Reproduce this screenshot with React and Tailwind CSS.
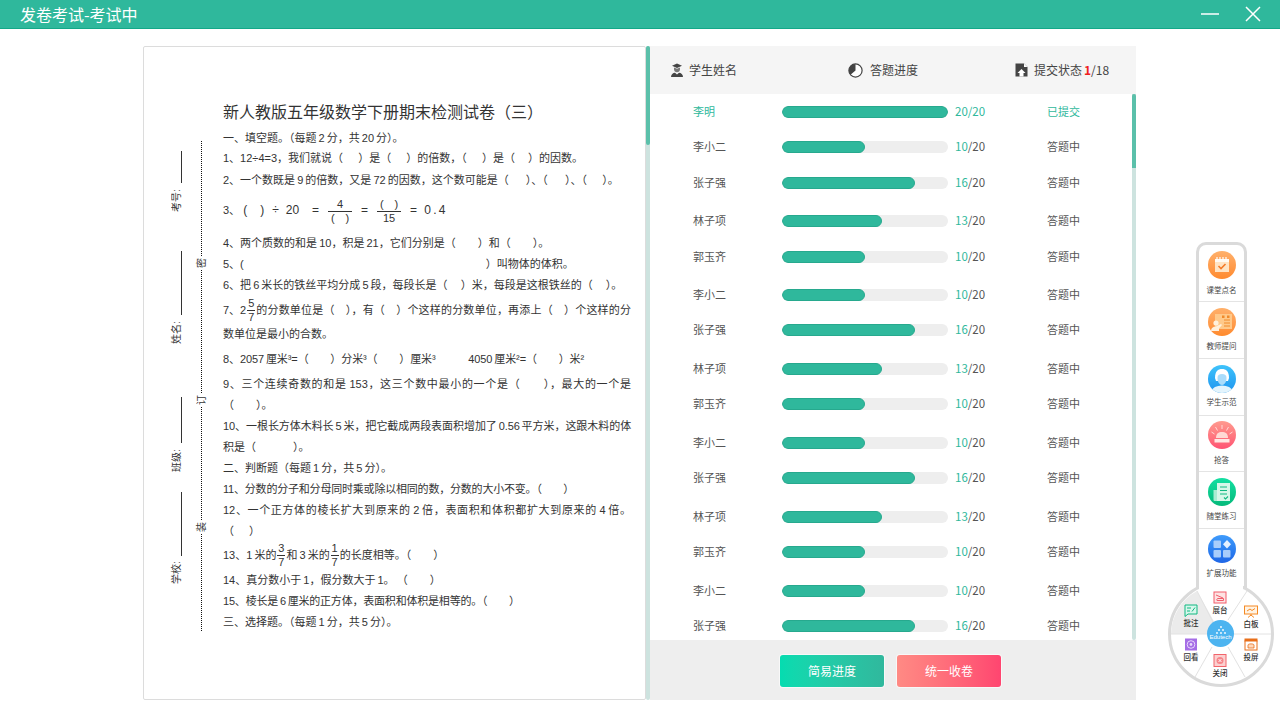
import React from 'react';

const rows = [
  { name: '李明', done: 20, width: 'w-full', gap: 'mt-0', finished: true },
  { name: '李小二', done: 10, width: 'w-1/2', gap: 'mt-[15px]' },
  { name: '张子强', done: 16, width: 'w-4/5', gap: 'mt-[16px]' },
  { name: '林子项', done: 13, width: 'w-[60%]', gap: 'mt-[18px]' },
  { name: '郭玉齐', done: 10, width: 'w-1/2', gap: 'mt-[16px]' },
  { name: '李小二', done: 10, width: 'w-1/2', gap: 'mt-[18px]' },
  { name: '张子强', done: 16, width: 'w-4/5', gap: 'mt-[15px]' },
  { name: '林子项', done: 13, width: 'w-[60%]', gap: 'mt-[19px]' },
  { name: '郭玉齐', done: 10, width: 'w-1/2', gap: 'mt-[15px]' },
  { name: '李小二', done: 10, width: 'w-1/2', gap: 'mt-[19px]' },
  { name: '张子强', done: 16, width: 'w-4/5', gap: 'mt-[15px]' },
  { name: '林子项', done: 13, width: 'w-[60%]', gap: 'mt-[19px]' },
  { name: '郭玉齐', done: 10, width: 'w-1/2', gap: 'mt-[15px]' },
  { name: '李小二', done: 10, width: 'w-1/2', gap: 'mt-[19px]' },
  { name: '张子强', done: 16, width: 'w-4/5', gap: 'mt-[15px]' },
];

const Line = ({ gap, children, full, tall }) => (
  <div
    className={`${gap} ${tall ? 'h-[26px]' : 'h-[16px]'} flex items-center whitespace-pre ${
      full ? 'w-[408px] justify-between' : ''
    }`}
  >
    {children}
  </div>
);

const Frac = ({ top, bottom, wide }) => (
  <span className={`inline-flex flex-col items-center leading-[13px] text-[11px] mx-[1px] ${wide ? 'w-[24px]' : 'w-[8px]'}`}>
    <span className="w-full text-center border-b border-[#333]">{top}</span>
    <span>{bottom}</span>
  </span>
);

// Justified text line, spreads to the paper's right edge
const Spread = ({ children, className = '' }) => (
  <span className={`block w-full text-justify [text-align-last:justify] whitespace-nowrap ${className}`}>{children}</span>
);

const SideLabel = ({ gap, children }) => (
  <div className={`${gap} h-[22px] [writing-mode:vertical-rl] [text-orientation:sideways] rotate-180 text-[10px] leading-[10px] text-[#333] whitespace-nowrap`}>{children}</div>
);

const SealChar = ({ children }) => (
  <div className="h-[14px] w-[11px] shrink-0 flex items-center justify-center [writing-mode:vertical-rl] [text-orientation:sideways] rotate-180 text-[10px] leading-[11px]">{children}</div>
);

const Paper = () => (
  <div className="w-[503px] h-full bg-white border border-[#dcdcdc] rounded-[2px] flex pl-[28px] text-[#333] font-['Liberation_Sans','Noto_Sans_CJK_SC',sans-serif]">
    <div className="w-[10px] mt-[104px] flex flex-col items-end">
      <div className="w-px h-[32px] bg-[#333]"></div>
      <SideLabel gap="mt-[7px]">考号:</SideLabel>
      <div className="w-px h-[64px] mt-[39px] bg-[#333]"></div>
      <SideLabel gap="mt-[7px]">姓名:</SideLabel>
      <div className="w-px h-[46px] mt-[53px] bg-[#333]"></div>
      <SideLabel gap="mt-[7px]">班级:</SideLabel>
      <div className="w-px h-[64px] mt-[20px] bg-[#333]"></div>
      <SideLabel gap="mt-[6px]">学校:</SideLabel>
    </div>

    <div className="w-[1px] ml-[19px] mt-[94px] flex flex-col items-center">
      <div className="h-[115px] border-l border-dotted border-[#111]"></div>
      <SealChar>密</SealChar>
      <div className="h-[123px] border-l border-dotted border-[#111]"></div>
      <SealChar>订</SealChar>
      <div className="h-[113px] border-l border-dotted border-[#111]"></div>
      <SealChar>装</SealChar>
      <div className="h-[97px] border-l border-dotted border-[#111]"></div>
    </div>

    <div className="ml-[21px] mt-[56px] text-[11px] leading-[16px] [word-spacing:-1px]">
      <div className="h-[20px] text-[16px] leading-[20px] whitespace-nowrap">新人教版五年级数学下册期末检测试卷（三）</div>
      <Line gap="mt-[7px]">一、填空题。（每题 2 分，共 20 分）。</Line>
      <Line gap="mt-[4px]">1、12÷4=3，我们就说（　  ）是（　  ）的倍数，（　  ）是（　 ）的因数。</Line>
      <Line gap="mt-[6px]">2、一个数既是 9 的倍数，又是 72 的因数，这个数可能是（　   ）、（　   ）、（　  ）。</Line>
      <div className="mt-[7px] h-[30px] flex items-center whitespace-pre text-[12px]">
        <span className="text-[11px]">3、</span>
        <span className="ml-[3px]">(</span>
        <span className="ml-[13px]">)</span>
        <span className="ml-[8px]">÷</span>
        <span className="ml-[7px]">20</span>
        <span className="ml-[13px]">=</span>
        <span className="ml-[8px]"><Frac top="4" bottom="(　)" wide /></span>
        <span className="ml-[8px]">=</span>
        <span className="ml-[8px]"><Frac top="(　)" bottom="15" wide /></span>
        <span className="ml-[8px]">=</span>
        <span className="ml-[7px]">0 . 4</span>
      </div>
      <Line gap="mt-[10px]">4、两个质数的和是 10，积是 21，它们分别是（　　）和（　　）。</Line>
      <Line gap="mt-[5px]">5、(　　　　　　　　　　　　　　　　　　　　　　）叫物体的体积。</Line>
      <Line gap="mt-[5px]">6、把 6 米长的铁丝平均分成 5 段，每段长是（　 ）米，每段是这根铁丝的（　 ）。</Line>
      <Line gap="mt-[4px]" tall full>
        <span>7、2</span><Frac top="5" bottom="7" />
        <span className="flex-1"><Spread>的分数单位是（　），有（　）个这样的分数单位，再添上（　）个这样的分</Spread></span>
      </Line>
      <Line gap="mt-[3px]">数单位是最小的合数。</Line>
      <Line gap="mt-[9px]"><span className="tracking-[-0.1px]">8、2057 厘米³=（　　）分米³（　　）厘米³　　　4050 厘米²=（　　）米²</span></Line>
      <Line gap="mt-[9px]" full><Spread>9、三个连续奇数的和是 153，这三个数中最小的一个是（　　），最大的一个是</Spread></Line>
      <Line gap="mt-[5px]">（　　）。</Line>
      <Line gap="mt-[5px]" full><Spread className="tracking-[-0.15px]">10、一根长方体木料长 5 米，把它截成两段表面积增加了 0.56 平方米，这跟木料的体</Spread></Line>
      <Line gap="mt-[5px]">积是（　　　  ）。</Line>
      <Line gap="mt-[5px]">二、判断题（每题 1 分，共 5 分）。</Line>
      <Line gap="mt-[5px]"><span className="tracking-[-0.2px]">11、分数的分子和分母同时乘或除以相同的数，分数的大小不变。（　　）</span></Line>
      <Line gap="mt-[5px]" full><Spread>12、一个正方体的棱长扩大到原来的 2 倍，表面积和体积都扩大到原来的 4 倍。</Spread></Line>
      <Line gap="mt-[5px]">（　  ）</Line>
      <Line gap="mt-[3px]" tall>
        <span>13、1 米的</span><Frac top="3" bottom="7" /><span>和 3 米的</span><Frac top="1" bottom="7" /><span>的长度相等。（　　）</span>
      </Line>
      <Line gap="mt-[4px]">14、真分数小于 1，假分数大于 1。 （　　）</Line>
      <Line gap="mt-[5px]"><span className="tracking-[-0.2px]">15、棱长是 6 厘米的正方体，表面积和体积是相等的。（　　）</span></Line>
      <Line gap="mt-[5px]">三、选择题。（每题 1 分，共 5 分）。</Line>
    </div>
  </div>
);

const StudentIcon = () => (
  <svg width="14" height="14" viewBox="0 0 14 14" fill="#444">
    <path d="M7 0.5 L12 2.8 L7 5 L2 2.8 Z" />
    <path d="M4 4.5 L7 5.8 L10 4.5 V6.2 C10 8.2 8.6 9.2 7 9.2 C5.4 9.2 4 8.2 4 6.2 Z" fill="#777" />
    <path d="M1 14 C1 11.2 3 10 5 9.8 L7 11.6 L9 9.8 C11 10 13 11.2 13 14 Z" />
  </svg>
);

const PieIcon = () => (
  <svg width="15" height="15" viewBox="0 0 15 15">
    <circle cx="7.5" cy="7.5" r="6.6" fill="#fff" stroke="#444" strokeWidth="1.2" />
    <path d="M7.5 1 A6.5 6.5 0 0 0 2.5 11.7 L7.5 7.5 Z" fill="#444" />
  </svg>
);

const UploadIcon = () => (
  <svg width="13" height="14" viewBox="0 0 13 14">
    <path d="M0.5 0.5 H9 L12.5 4 V13.5 H0.5 Z" fill="#444" />
    <path d="M6.5 6 L10.5 10 H8.5 V13.5 H4.5 V10 H2.5 Z" fill="#fff" />
    <path d="M9 0.5 V4 H12.5 Z" fill="#fff" />
  </svg>
);

const Board = () => (
  <div className="w-[486px] h-full flex flex-col">
    <div className="h-[48px] bg-[#f5f5f5] flex items-center pl-[20px] text-[12px] text-[#444]">
      <div className="w-[178px] flex items-center">
        <StudentIcon />
        <span className="ml-[5px]">学生姓名</span>
      </div>
      <div className="w-[167px] flex items-center">
        <PieIcon />
        <span className="ml-[7px]">答题进度</span>
      </div>
      <div className="flex items-center">
        <UploadIcon />
        <span className="ml-[6px]">提交状态</span>
        <span className="ml-[2px] text-[#f02020] font-bold">1</span>
        <span>/18</span>
      </div>
    </div>

    <div className="h-[546px] flex overflow-hidden bg-white">
      <div className="w-[482px] pt-[8px] text-[11px]">
        {rows.map((row, i) => (
          <div key={i} className={`${row.gap} h-[20px] flex items-center`}>
            <div className={`w-[132px] pl-[43px] pb-[1px] ${row.finished ? 'text-[#2fb89c]' : 'text-[#555]'}`}>{row.name}</div>
            <div className="w-[166px] h-[12px] rounded-full bg-[#eeeeee] overflow-hidden">
              <div className={`${row.width} h-full rounded-full bg-[#2fb89c] border border-[#27a98e]`}></div>
            </div>
            <div className="w-[99px] pl-[7px] pb-[1px] text-[#555] text-[11.5px]">
              <span className="text-[#2fb89c]">{row.done}</span>
              <span className={row.finished ? 'text-[#2fb89c]' : ''}>/20</span>
            </div>
            <div className={`pb-[1px] ${row.finished ? 'text-[#2fb89c]' : 'text-[#555]'}`}>{row.finished ? '已提交' : '答题中'}</div>
          </div>
        ))}
      </div>
      <div className="w-[4px] h-full bg-[#cde3df] rounded-b-sm">
        <div className="h-[74px] bg-[#5bc0aa] rounded-t-sm"></div>
      </div>
    </div>

    <div className="h-[60px] bg-[#eeeeee] flex items-start justify-center gap-[13px] pt-[15px] pr-[5px] text-[12px] text-white">
      <button className="w-[104px] h-[32px] rounded-[3px] ring-1 ring-[#f8f8f8] bg-linear-to-r from-[#04dcb0] to-[#30b89d]">简易进度</button>
      <button className="w-[104px] h-[32px] rounded-[3px] ring-1 ring-[#f8f8f8] bg-linear-to-r from-[#ff8a84] to-[#ff4570]">统一收卷</button>
    </div>
  </div>
);

const ClipIcon = () => (
  <svg width="18" height="18" viewBox="0 0 18 18">
    <rect x="2" y="3" width="14" height="13" fill="#ffe4c4" />
    <path d="M2 3 H16 V6 H2 Z" fill="#fff" opacity=".8" />
    <path d="M4 1 V4 M7 1 V4 M10 1 V4 M13 1 V4" stroke="#fff" strokeWidth="1.2" />
    <path d="M5.5 10 L8 12.5 L12.5 8" stroke="#f47b29" strokeWidth="1.6" fill="none" />
  </svg>
);

const TeacherIcon = () => (
  <svg width="24" height="22" viewBox="0 0 24 22">
    <rect x="5" y="3" width="17" height="15" fill="#ffc98a" />
    <path d="M14 9 H20 M14 12 H20 M14 15 H20" stroke="#f08a2a" strokeWidth="1" />
    <rect x="12" y="4.5" width="2.5" height="2.5" fill="#f08a2a" />
    <rect x="17" y="4.5" width="2.5" height="2.5" fill="#f08a2a" />
    <circle cx="6" cy="12" r="2.6" fill="#fff0dc" />
    <path d="M1 20 C1 17 3 15.5 6 15.5 L11 13 L12 14 L9 17.5 V20 Z" fill="#fff0dc" />
  </svg>
);

const StudentFace = () => (
  <svg width="28" height="28" viewBox="0 0 28 28">
    <ellipse cx="14" cy="26" rx="10" ry="5.5" fill="#e3f4fd" />
    <path d="M7 13 C7 6 10 4 14 4 C18 4 21 6 21 13 L20 16 H8 Z" fill="#fff" />
    <path d="M9.5 13 C9.5 10 11 9 14 9 C17 9 18.5 10 18.5 13 C18.5 17 16.5 20 14 20 C11.5 20 9.5 17 9.5 13 Z" fill="#a9dcfb" />
  </svg>
);

const AlarmIcon = () => (
  <svg width="24" height="22" viewBox="0 0 24 22">
    <path d="M6 14 C6 9.5 8.5 8 12 8 C15.5 8 18 9.5 18 14 Z" fill="#ffd9d5" />
    <rect x="4.5" y="15" width="15" height="3.5" fill="#ffe7e4" />
    <path d="M12 1 V5 M5.5 3 L7.5 6.5 M18.5 3 L16.5 6.5 M1.5 8 L4.5 10 M22.5 8 L19.5 10" stroke="#ffd9d5" strokeWidth="1" />
  </svg>
);

const PracticeIcon = () => (
  <svg width="22" height="22" viewBox="0 0 22 22">
    <path d="M6 2 H19 V20 H6 Z" fill="#d6f7e9" />
    <path d="M2.5 9 H6 V20 H4 C3 20 2.5 19.5 2.5 18.5 Z" fill="#a8ecd2" />
    <path d="M9 6 H16 M9 9.5 H16 M9 13 H16" stroke="#10b981" strokeWidth="1.2" />
    <path d="M13 16.5 L14.5 18 L17 15.5" stroke="#10b981" strokeWidth="1.1" fill="none" />
  </svg>
);

const ExpandIcon = () => (
  <svg width="20" height="20" viewBox="0 0 20 20">
    <rect x="1.5" y="1.5" width="7.5" height="7.5" rx="1" fill="#a8cdfb" />
    <path d="M15 1 L19 5.2 L15 9.5 L11 5.2 Z" fill="#e6f1ff" />
    <rect x="1.5" y="11" width="7.5" height="7.5" rx="1" fill="#a8cdfb" />
    <rect x="11" y="11" width="7.5" height="7.5" rx="1" fill="#a8cdfb" />
  </svg>
);

const tools = [
  { label: '课堂点名', row: 'h-[57px] pt-[6px] border-b', gap: 'mt-[6px]', bg: 'bg-linear-to-b from-[#ffb06a] to-[#ff8a2c]', icon: <ClipIcon /> },
  { label: '教师提问', row: 'h-[57px] pt-[6px] border-b', gap: 'mt-[5px]', bg: 'bg-linear-to-b from-[#ffb06a] to-[#ff8a2c]', icon: <TeacherIcon /> },
  { label: '学生示范', row: 'h-[57px] pt-[6px] border-b', gap: 'mt-[4px]', bg: 'bg-linear-to-b from-[#3fc3fb] to-[#1f94ee]', icon: <StudentFace /> },
  { label: '抢答', row: 'h-[56px] pt-[5px] border-b', gap: 'mt-[6px]', bg: 'bg-linear-to-b from-[#ff9a8f] to-[#ff5273]', icon: <AlarmIcon /> },
  { label: '随堂练习', row: 'h-[57px] pt-[6px] border-b', gap: 'mt-[5px]', bg: 'bg-linear-to-b from-[#14dfa2] to-[#05b97a]', icon: <PracticeIcon /> },
  { label: '扩展功能', row: 'h-[57px] pt-[6px]', gap: 'mt-[5px]', bg: 'bg-linear-to-b from-[#3f9bfb] to-[#1f66e6]', icon: <ExpandIcon /> },
];

const wheelItems = [
  {
    label: '展台',
    pos: 'left-[36px] top-[12px]',
    icon: (
      <g>
        <rect x="1" y="1" width="12" height="11" fill="#fde3e3" stroke="#f25c6b" />
        <path d="M3 4 L10 7 M4 9.5 H10.5 V7.5 H5 C4 7.5 3.5 8.5 4 9.5 Z" stroke="#f25c6b" fill="none" />
      </g>
    ),
  },
  {
    label: '白板',
    pos: 'left-[67px] top-[26px]',
    icon: (
      <g>
        <rect x="0.5" y="1" width="13" height="8" fill="#fff3e4" stroke="#f58a24" />
        <path d="M3 6 L6 4 L8 5.5 L11 3.5 M7 9 V11 M4 12.5 L7 10 L10 12.5" stroke="#f58a24" fill="none" />
      </g>
    ),
  },
  {
    label: '投屏',
    pos: 'left-[67px] top-[59px]',
    icon: (
      <g>
        <rect x="0.5" y="0.5" width="13" height="3" fill="#e86f1a" />
        <rect x="1" y="3" width="12" height="9" fill="#fff" stroke="#e86f1a" />
        <path d="M4 10 V7 C4 5.5 10 5.5 10 7 V10 Z" fill="#ffd9bd" stroke="#e86f1a" strokeWidth="0.8" />
      </g>
    ),
  },
  {
    label: '关闭',
    pos: 'left-[36px] top-[75px]',
    icon: (
      <g>
        <rect x="1" y="0.5" width="12" height="12" fill="#fbd0d0" stroke="#f2646b" />
        <circle cx="7" cy="6.5" r="3.5" fill="#f7858a" />
        <path d="M5.5 5 L8.5 8 M8.5 5 L5.5 8" stroke="#fff" strokeWidth="0.9" />
      </g>
    ),
  },
  {
    label: '回看',
    pos: 'left-[7px] top-[59px]',
    icon: (
      <g>
        <rect x="1" y="0.5" width="12" height="12" fill="#a56de6" />
        <circle cx="7" cy="6.5" r="3.8" fill="none" stroke="#e8d8fb" />
        <circle cx="7" cy="6.5" r="1.4" fill="#e8d8fb" />
      </g>
    ),
  },
  {
    label: '批注',
    pos: 'left-[7px] top-[25px]',
    icon: (
      <g>
        <path d="M1 1 H13 V10 H4 L1 12.5 Z" fill="#d7f7ec" stroke="#10b981" />
        <path d="M3 4 H7 M3 7 H6 M8 7.5 L11 3.5" stroke="#10b981" fill="none" />
      </g>
    ),
  },
];

const Dock = () => (
  <div className="absolute left-[1166px] top-[242px] w-[110px] h-[447px] font-['Noto_Sans_CJK_SC',sans-serif]">
    <div className="absolute left-[30px] top-0 w-[51px] h-[349px] border-x-[3px] border-t-[3px] border-[#dadada] rounded-t-[10px] bg-white">
      {tools.map((tool) => (
        <div key={tool.label} className={`flex flex-col items-center border-[#e4e4e4] ${tool.row}`}>
          <div className={`w-[28px] h-[28px] shrink-0 rounded-full overflow-hidden flex items-center justify-center ${tool.bg}`}>{tool.icon}</div>
          <div className={`${tool.gap} text-[7.5px] leading-[10px] text-[#444] whitespace-nowrap`}>{tool.label}</div>
        </div>
      ))}
    </div>

    <div className="absolute left-0 top-[337px] w-[110px] h-[110px]">
      <svg width="110" height="110" viewBox="0 0 110 110">
        <circle cx="55" cy="55" r="51.5" fill="#fff" stroke="#dadada" strokeWidth="3" />
        <path d="M31 12 L55 55 L5 55 A50 50 0 0 1 31 12 Z" fill="#ebebeb" />
        <rect x="33" y="0" width="44" height="12" fill="#fff" />
        <path d="M31 12 L47 43 M81 12 L62 41 M29 98 L46 68 M79 98 L62 68 M5 55 H105" stroke="#e2e2e2" strokeWidth="1" />
      </svg>
      {wheelItems.map((item) => (
        <div key={item.label} className={`absolute ${item.pos} w-[36px] flex flex-col items-center`}>
          <svg width="14" height="13" viewBox="0 0 14 13">{item.icon}</svg>
          <div className="mt-[1px] text-[7.5px] leading-[10px] font-medium text-[#333]">{item.label}</div>
        </div>
      ))}
      <div className="absolute left-[41px] top-[41px] w-[27px] h-[27px] rounded-full bg-[#4db4f0] flex flex-col items-center justify-center text-white">
        <svg width="10" height="8" viewBox="0 0 10 8" fill="#fff">
          <circle cx="5" cy="1" r="0.9" /><circle cx="3" cy="4" r="0.9" /><circle cx="7" cy="4" r="0.9" />
          <circle cx="1" cy="7" r="0.9" /><circle cx="5" cy="7" r="0.9" /><circle cx="9" cy="7" r="0.9" />
        </svg>
        <div className="text-[6px] leading-[7px] font-['Liberation_Sans',sans-serif]">Edutech</div>
      </div>
    </div>
  </div>
);

export default function App() {
  return (
    <div className="relative w-[1280px] h-[720px] overflow-hidden bg-white font-['Noto_Sans_CJK_SC',sans-serif]">
      <header className="h-[29px] bg-[#2fb89c] border-b border-[#13a888] flex items-center justify-between pl-[20px] text-white">
        <div className="text-[16px] leading-[28px]">发卷考试-考试中</div>
        <div className="flex items-center pr-[19px] gap-[26px]">
          <svg width="18" height="2" viewBox="0 0 18 2"><path d="M0 1 H18" stroke="#fff" strokeWidth="1.5" /></svg>
          <svg width="16" height="16" viewBox="0 0 16 16"><path d="M1 1 L15 15 M15 1 L1 15" stroke="#fff" strokeWidth="1.5" /></svg>
        </div>
      </header>

      <main className="h-[654px] mt-[17px] ml-[143px] flex">
        <Paper />
        <div className="w-[4px] h-full bg-[#cde3df] rounded-sm">
          <div className="h-[99px] bg-[#5bc0aa] rounded-sm"></div>
        </div>
        <Board />
      </main>

      <Dock />
    </div>
  );
}
